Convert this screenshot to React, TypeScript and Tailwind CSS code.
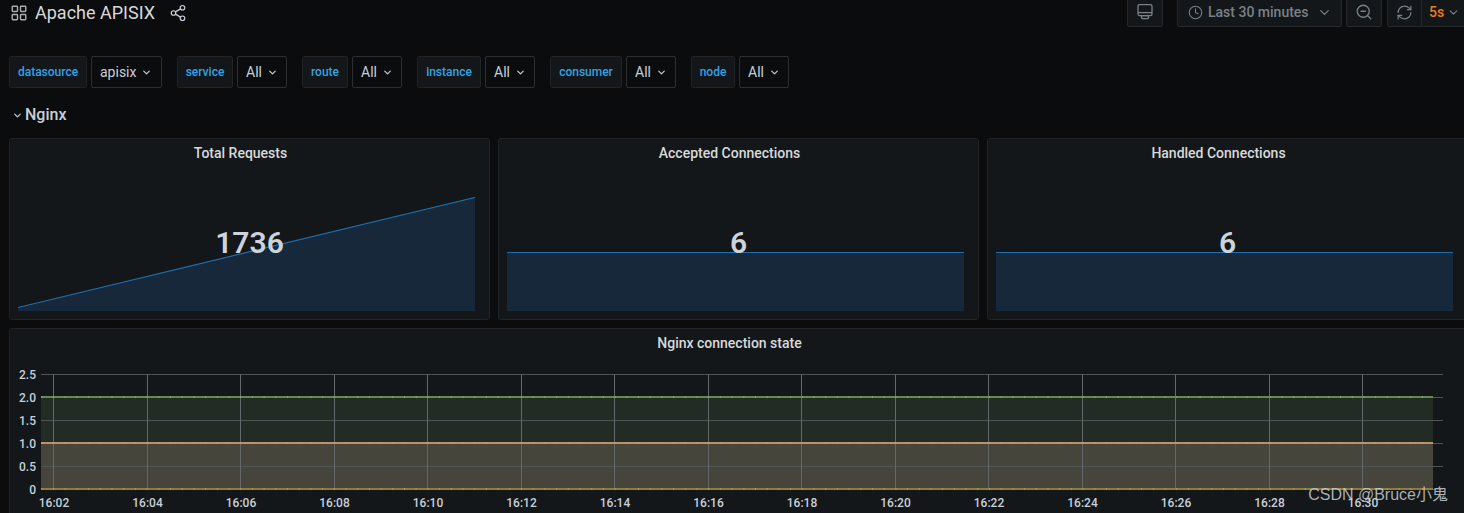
import { ChevronDown, Clock, LayoutGrid, RefreshCw, Share2, ZoomOut } from "lucide-react";

const vars = [
  { label: "datasource", value: "apisix", lw: "w-[78px]", sw: "w-[71px]" },
  { label: "service", value: "All", lw: "w-[56px]", sw: "w-[50px]" },
  { label: "route", value: "All", lw: "w-[46px]", sw: "w-[50px]" },
  { label: "instance", value: "All", lw: "w-[64px]", sw: "w-[50px]" },
  { label: "consumer", value: "All", lw: "w-[72px]", sw: "w-[50px]" },
  { label: "node", value: "All", lw: "w-[44px]", sw: "w-[50px]" },
];

const stats = [
  { title: "Total Requests", value: "1736", start: 110.5, end: 0.5 },
  { title: "Accepted Connections", value: "6", start: 55.5, end: 55.5 },
  { title: "Handled Connections", value: "6", start: 55.5, end: 55.5 },
];

function StatPanel({ title, value, start, end }: { title: string; value: string; start: number; end: number }) {
  return (
    <div className="relative h-[182px] w-[481px] shrink-0 rounded-[3px] border border-[#1f2326] bg-[#13171a]">
      <div className="flex h-[28px] items-center justify-center pr-[18px] text-sm font-medium text-[#d8d9da]">{title}</div>
      <div className="absolute left-[8px] top-[58px] h-[114px] w-[457px]">
        <svg width="457" height="114" viewBox="0 0 457 114" className="block">
          <polygon points={`0,${start} 457,${end} 457,114 0,114`} fill="#16283a" />
          <line x1="0" y1={start} x2="457" y2={end} stroke="#1f6fb0" strokeWidth="1.2" />
        </svg>
      </div>
      <div className="absolute inset-x-0 top-[85px] text-center text-[30px] font-semibold leading-[38px] text-[#ccd3da]">{value}</div>
    </div>
  );
}

const xs = ["16:02", "16:04", "16:06", "16:08", "16:10", "16:12", "16:14", "16:16", "16:18", "16:20", "16:22", "16:24", "16:26", "16:28", "16:30"];
const ys = ["2.5", "2.0", "1.5", "1.0", "0.5", "0"];

function Chart() {
  return (
    <svg width="1446" height="140" viewBox="0 0 1446 140" className="-mt-[6px] block overflow-visible" style={{ fontFamily: "Roboto, sans-serif" }}>
      <g transform="translate(0 6)">
        <rect x="31" y="23" width="1392" height="46" fill="#232b25" />
        <rect x="31" y="69" width="1392" height="46" fill="#45453c" />
        {ys.map((y, i) => (
          <g key={y}>
            <line x1="31" x2="1433" y1={0.5 + i * 23} y2={0.5 + i * 23} stroke="#515457" />
            <text x="26" y={4.5 + i * 23} textAnchor="end" fontSize="12" fontWeight="500" fill="#c7d0d9">{y}</text>
          </g>
        ))}
        {xs.map((x, i) => {
          const px = 43.5 + i * 93.5;
          return (
            <g key={x}>
              <line x1={Math.floor(px) + 0.5} x2={Math.floor(px) + 0.5} y1="0" y2="115" stroke="#65686a" />
              <text x={px + 0.5} y="133" textAnchor="middle" fontSize="12" fontWeight="500" fill="#c7d0d9">{x}</text>
            </g>
          );
        })}
        <line x1="31" x2="1423" y1="23" y2="23" stroke="#5f8a50" strokeWidth="2" />
        <line x1="31" x2="1423" y1="69" y2="69" stroke="#b9946b" strokeWidth="2" />
        <line x1="31" x2="1423" y1="115" y2="115" stroke="#8f7b3c" strokeWidth="2" />
        <line x1="31" x2="1423" y1="23" y2="23" stroke="#86a873" strokeWidth="2" strokeDasharray="1 10.7" strokeDashoffset="-12" />
        <line x1="31" x2="1423" y1="69" y2="69" stroke="#d49660" strokeWidth="2" strokeDasharray="1 10.7" strokeDashoffset="-12" />
        <line x1="31" x2="1423" y1="115" y2="115" stroke="#b59a4a" strokeWidth="2" strokeDasharray="1 10.7" strokeDashoffset="-12" />
      </g>
    </svg>
  );
}

function MonitorIcon() {
  return (
    <svg width="16" height="16" viewBox="0 0 16 16" fill="none" stroke="#7b8087" strokeWidth="1.3">
      <rect x="1" y="0.6" width="14" height="11" rx="1.6" />
      <line x1="1" y1="8.6" x2="15" y2="8.6" />
      <rect x="4.5" y="11.6" width="7" height="3" rx="0.8" />
    </svg>
  );
}

export default function App() {
  return (
    <div className="relative h-[513px] w-[1464px] overflow-hidden bg-[#0b0c0e] pl-[9px] text-[#d8d9da]" style={{ fontFamily: "Roboto, sans-serif" }}>
      <header className="flex h-[27px] items-start">
        <div className="flex h-[25px] items-center">
          <LayoutGrid size={18} strokeWidth={1.9} className="ml-px text-[#a9adb2]" />
          <span className="ml-[7px] text-lg leading-6 text-[#d8d9da]">Apache APISIX</span>
          <Share2 size={18} strokeWidth={1.6} className="ml-[14px] text-[#c7d0d9]" />
        </div>
        <div className="ml-auto flex h-[27px] items-end">
          <div className="flex h-[30px] w-[36px] items-center justify-center rounded-[2px] border border-[#25272b] bg-[#13171a]">
            <MonitorIcon />
          </div>
          <div className="ml-[14px] flex h-[30px] w-[165px] items-center rounded-[2px] border border-[#25272b] bg-[#13171a] pl-[10px] pr-[9px] text-sm font-medium text-[#7b8087]">
            <Clock size={15} strokeWidth={1.7} />
            <span className="ml-[5px]">Last 30 minutes</span>
            <ChevronDown size={15} className="ml-auto" />
          </div>
          <div className="ml-[4px] flex h-[30px] w-[36px] items-center justify-center rounded-[2px] border border-[#25272b] bg-[#13171a] text-[#7b8087]">
            <ZoomOut size={18} strokeWidth={1.7} />
          </div>
          <div className="ml-[5px] flex h-[30px] w-[35px] items-center justify-center rounded-l-[2px] border border-[#25272b] bg-[#13171a] text-[#7b8087]">
            <RefreshCw size={17} strokeWidth={1.7} />
          </div>
          <div className="flex h-[30px] w-[42px] items-center border-y border-[#25272b] bg-[#13171a] pl-[7px] text-sm font-medium text-[#eb7b18]">
            5s
            <ChevronDown size={13} strokeWidth={2.2} className="ml-[3px] text-[#7b8087]" />
          </div>
        </div>
      </header>

      <div className="mt-[29px] flex h-[32px] gap-[15px]">
        {vars.map((v) => (
          <div key={v.label} className="flex gap-[4px]">
            <div className={`${v.lw} flex items-center justify-center rounded-[2px] border border-[#1f2326] bg-[#13171a] text-xs font-medium text-[#33a2e5]`}>{v.label}</div>
            <div className={`${v.sw} flex items-center rounded-[2px] border border-[#2c2e32] bg-[#0b0c0e] pl-[8px] text-sm text-[#c7d0d9]`}>
              {v.value}
              <ChevronDown size={11} strokeWidth={2.6} className="ml-[5px]" />
            </div>
          </div>
        ))}
      </div>

      <div className="mt-[16px] flex h-[22px] items-center text-base font-medium text-[#c7d0d9]">
        <ChevronDown size={11} strokeWidth={2.6} className="ml-[3px] mr-[2px]" />
        Nginx
      </div>

      <div className="mt-[12px] flex gap-[8px]">
        {stats.map((s) => (
          <StatPanel key={s.title} {...s} />
        ))}
      </div>

      <div className="mt-[8px] h-[200px] w-[1459px] rounded-[3px] border border-[#1f2326] bg-[#13171a]">
        <div className="flex h-[28px] items-center justify-center pr-[18px] text-sm font-medium text-[#d8d9da]">Nginx connection state</div>
        <div className="mt-[17px]">
          <Chart />
        </div>
      </div>

      <div className="absolute bottom-[8px] right-[16px] text-[16px] leading-5 text-[#c9cdd1]/85" style={{ fontFamily: '"Liberation Sans", "Noto Sans CJK SC", sans-serif' }}>
        CSDN @Bruce小鬼
      </div>
    </div>
  );
}
